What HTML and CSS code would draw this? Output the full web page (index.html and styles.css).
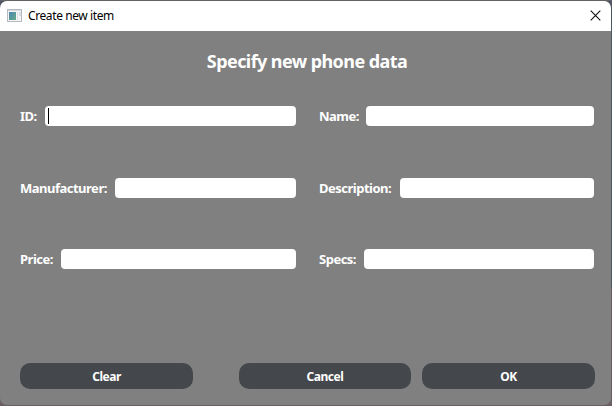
FILE: index.html
```html
<!DOCTYPE html>
<html lang="en">
<head>
<meta charset="utf-8">
<title>Create new item</title>
<link rel="stylesheet" href="styles.css">
</head>
<body>
<main class="dialog">
  <header class="titlebar">
    <svg class="app-icon" viewBox="0 0 15 13" aria-hidden="true">
      <defs><linearGradient id="pane" x1="0" y1="0" x2="1" y2="1"><stop offset="0" stop-color="#4c84b4"/><stop offset="1" stop-color="#63ab86"/></linearGradient></defs>
      <path fill="#b5bac0" d="M0 0h15v13H0z"/>
      <path fill="#f4f5f6" d="M1 1h13v11H1z"/>
      <path fill="#d4d8dc" d="M1 1h13v1H1z"/>
      <path fill="url(#pane)" d="M2 3h7v8H2z"/>
      <path fill="#d9dfe3" d="M10 3h1v8h-1zM12 3h2v4h-2z"/>
    </svg>
    <span class="window-title">Create new item</span>
    <svg class="close" viewBox="0 0 11 11" aria-hidden="true"><path d="M.7.7l9.600 9.600M10.300.7L.7 10.300"/></svg>
  </header>
  <h1 class="heading">Specify new phone data</h1>
  <form class="fields">
    <div class="field"><span class="label id">ID:</span><div class="input"><i class="caret"></i></div></div>
    <div class="field"><span class="label name">Name:</span><div class="input"></div></div>
    <div class="field"><span class="label manufacturer">Manufacturer:</span><div class="input"></div></div>
    <div class="field"><span class="label description">Description:</span><div class="input"></div></div>
    <div class="field"><span class="label price">Price:</span><div class="input"></div></div>
    <div class="field"><span class="label specs">Specs:</span><div class="input"></div></div>
  </form>
  <footer class="actions">
    <button class="button clear">Clear</button>
    <button class="button cancel">Cancel</button>
    <button class="button ok">OK</button>
  </footer>
</main>
</body>
</html>
```
FILE: styles.css
```css
* { box-sizing: border-box; }
body {
  margin: 0;
  width: 612px;
  height: 406px;
  padding: 1px 1px 1px 0;
  overflow: hidden;
  background: linear-gradient(#626262 0 1px, transparent 1px), linear-gradient(#4e5564 0 288px, #6b5e63 290px);
  font-family: "Noto Sans", "Open Sans", sans-serif;
}
.dialog {
  width: 611px;
  height: 404px;
  display: flex;
  flex-direction: column;
  border-radius: 7px;
  overflow: hidden;
  background: #808080;
}
.titlebar {
  height: 30px;
  flex: none;
  display: flex;
  align-items: center;
  padding: 0 10px 2px 7px;
  background: #fff;
}
.app-icon { width: 15px; height: 13px; }
.window-title {
  margin-left: 6px;
  padding-top: 2px;
  color: #000;
  font-size: 12px;
  line-height: 16px;
  letter-spacing: -0.4px;
  white-space: nowrap;
}
.close { width: 11px; height: 11px; margin-left: auto; fill: none; stroke: #111; stroke-width: 1.1; }
.heading {
  margin: 16px 0 0 3px;
  height: 29px;
  font-size: 18px;
  line-height: 28px;
  font-weight: 700;
  letter-spacing: -0.58px;
  text-align: center;
  color: #fff;
}
.fields {
  display: grid;
  grid-template-columns: 276px 275px;
  grid-template-rows: 20px 20px 20px;
  row-gap: 51.500px;
  column-gap: 23px;
  padding: 0 0 0 20px;
  margin-top: 30px;
}
.field { display: flex; height: 20px; }
.label {
  flex: none;
  color: #fff;
  font-size: 13px;
  font-weight: 700;
  letter-spacing: -0.5px;
  line-height: 20px;
  white-space: nowrap;
}
.id { width: 25px; }
.name { width: 47px; }
.manufacturer { width: 95px; }
.description { width: 81px; }
.price { width: 41px; }
.specs { width: 45px; }
.input { flex: 1; height: 20px; padding: 2px 3px; border-radius: 4px; background: #fff; }
.caret { display: block; width: 1px; height: 16px; background: #000; }
.actions { display: flex; margin-top: 94px; padding-left: 20px; }
.button {
  width: 173px;
  height: 26px;
  padding: 2px 0 0;
  border: 0;
  border-radius: 10px;
  background: #44474b;
  color: #fff;
  font: 700 12px/24px "Noto Sans", sans-serif;
  letter-spacing: -0.45px;
}
.cancel { width: 172px; margin-left: 46px; }
.ok { margin-left: 11px; }
```
